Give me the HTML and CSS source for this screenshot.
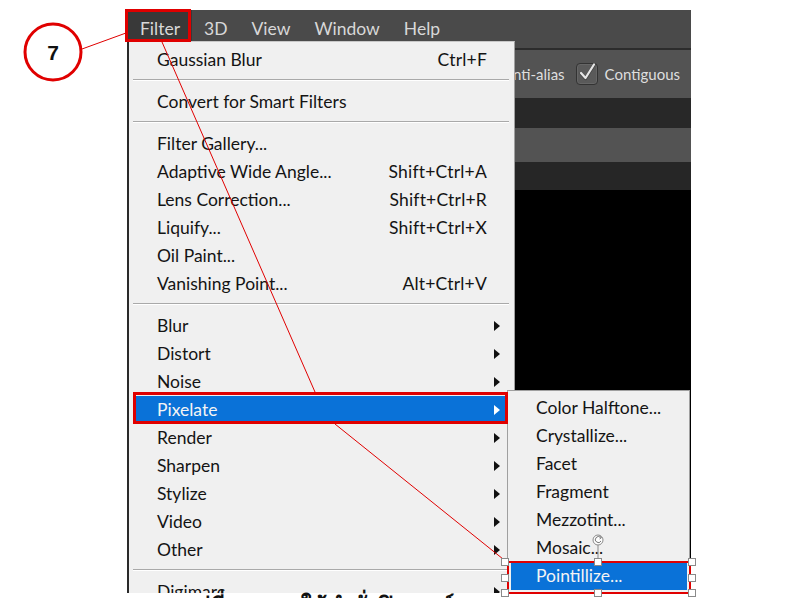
FILE: index.html
```html
<!DOCTYPE html>
<html>
<head>
<meta charset="utf-8">
<link rel="stylesheet" href="styles.css">
</head>
<body>
<div class="page">
  <div class="ps">
    <div class="menubar">
      <span class="mb-item active">Filter</span>
      <span class="mb-item">3D</span>
      <span class="mb-item">View</span>
      <span class="mb-item">Window</span>
      <span class="mb-item">Help</span>
    </div>
    <div class="optbar">
      <span class="opt-label">Anti-alias</span>
      <span class="chk">
        <svg width="22" height="22" viewBox="0 0 22 22"><path d="M5 11.5 L9.5 16.5 L18 3" fill="none" stroke="#2e2e2e" stroke-width="3.2" stroke-linejoin="round" stroke-linecap="round" opacity="0.5"/><path d="M5 11 L9.5 16 L18 2.5" fill="none" stroke="#e6e6e6" stroke-width="2.2" stroke-linejoin="round" stroke-linecap="round"/></svg>
      </span>
      <span class="opt-label">Contiguous</span>
    </div>
    <div class="band band-dark"></div>
    <div class="band band-gray"></div>
    <div class="band band-dark2"></div>
    <div class="canvas"></div>
  </div>

  <div class="menu">
    <div class="item"><span>Gaussian Blur</span><span class="sc">Ctrl+F</span></div>
    <div class="sep"></div>
    <div class="item"><span>Convert for Smart Filters</span></div>
    <div class="sep"></div>
    <div class="item"><span>Filter Gallery...</span></div>
    <div class="item"><span>Adaptive Wide Angle...</span><span class="sc">Shift+Ctrl+A</span></div>
    <div class="item"><span>Lens Correction...</span><span class="sc">Shift+Ctrl+R</span></div>
    <div class="item"><span>Liquify...</span><span class="sc">Shift+Ctrl+X</span></div>
    <div class="item"><span>Oil Paint...</span></div>
    <div class="item"><span>Vanishing Point...</span><span class="sc">Alt+Ctrl+V</span></div>
    <div class="sep"></div>
    <div class="item"><span>Blur</span><span class="arrow"></span></div>
    <div class="item"><span>Distort</span><span class="arrow"></span></div>
    <div class="item"><span>Noise</span><span class="arrow"></span></div>
    <div class="item hl"><span>Pixelate</span><span class="arrow"></span></div>
    <div class="item"><span>Render</span><span class="arrow"></span></div>
    <div class="item"><span>Sharpen</span><span class="arrow"></span></div>
    <div class="item"><span>Stylize</span><span class="arrow"></span></div>
    <div class="item"><span>Video</span><span class="arrow"></span></div>
    <div class="item"><span>Other</span><span class="arrow"></span></div>
    <div class="sep"></div>
    <div class="item"><span>Digimarc</span><span class="arrow"></span></div>
  </div>

  <div class="submenu">
    <div class="sitem">Color Halftone...</div>
    <div class="sitem">Crystallize...</div>
    <div class="sitem">Facet</div>
    <div class="sitem">Fragment</div>
    <div class="sitem">Mezzotint...</div>
    <div class="sitem">Mosaic...</div>
    <div class="sitem hl">Pointillize...</div>
  </div>

  <div class="caption">รูปที่ 7.7 การใช้คำสั่งฟิลเตอร์แบบ Pointillize</div>

  <svg class="annot" width="790" height="598" viewBox="0 0 790 598">
    <circle cx="53" cy="52" r="28" fill="#fff" stroke="#e00000" stroke-width="3"/>
    <text x="53" y="60" text-anchor="middle" class="num">7</text>
    <line x1="82" y1="49" x2="126" y2="33" stroke="#e00000" stroke-width="1"/>
    <rect x="126.5" y="10.5" width="63" height="30" fill="none" stroke="#e00000" stroke-width="3"/>
    <line x1="162" y1="42" x2="315" y2="392" stroke="#e00000" stroke-width="1"/>
    <rect x="134.5" y="393.5" width="372" height="29" fill="none" stroke="#e00000" stroke-width="3"/>
    <line x1="335" y1="424" x2="503" y2="559" stroke="#e00000" stroke-width="1"/>
    <rect x="508" y="562" width="182" height="31" fill="none" stroke="#e00000" stroke-width="2"/>
    <line x1="598" y1="545" x2="598" y2="559" stroke="#8a8a8a" stroke-width="1"/>
    <circle cx="598" cy="540" r="5" fill="#fff" stroke="#8a8a8a" stroke-width="1"/>
    <path d="M600.5 537.5 A3 3 0 1 0 601 541" fill="none" stroke="#777" stroke-width="1"/>
    <path d="M599.5 536 L601.5 537.6 L599.6 539" fill="none" stroke="#777" stroke-width="1"/>
    <g fill="#fff" stroke="#8a8a8a" stroke-width="1">
      <rect x="501.5" y="558.5" width="7" height="7"/>
      <rect x="594.5" y="558.5" width="7" height="7"/>
      <rect x="688.5" y="558.5" width="7" height="7"/>
      <rect x="501.5" y="574.5" width="7" height="7"/>
      <rect x="688.5" y="574.5" width="7" height="7"/>
      <rect x="501.5" y="589.5" width="7" height="7"/>
      <rect x="594.5" y="589.5" width="7" height="7"/>
      <rect x="688.5" y="589.5" width="7" height="7"/>
    </g>
  </svg>
</div>
</body>
</html>
```

FILE: styles.css
```css
* { box-sizing: border-box; }
html, body { margin: 0; padding: 0; background: #fff; }
body { font-family: Lato, "Liberation Sans", sans-serif; }

.page {
  position: relative;
  width: 790px;
  height: 598px;
  overflow: hidden;
  background: #fff;
  padding-top: 10px;
}

.ps {
  margin-left: 127px;
  width: 564px;
  height: 588px;
  display: flex;
  flex-direction: column;
  background: #000;
}

.menubar {
  height: 40px;
  background: #4a4a4a;
  border-bottom: 2px solid #2c2c2c;
  display: flex;
  align-items: stretch;
}
.mb-item {
  display: flex;
  align-items: center;
  padding: 0 12px 2px 12px;
  font-size: 17.5px;
  color: #d8d8d8;
}
.mb-item.active {
  background: #393939;
  padding-left: 13px;
  padding-right: 12px;
}

.optbar {
  height: 48px;
  background: #535353;
  display: flex;
  align-items: center;
  justify-content: flex-end;
  padding-right: 11px;
  gap: 7px;
}
.opt-label {
  font-size: 15px;
  color: #dedede;
  margin-top: -1px;
}
.opt-label:first-child { margin-right: 4px; }
.chk {
  width: 22px;
  height: 22px;
  border: 1px solid #333;
  border-radius: 4px;
  background: #5a5a5a;
  display: flex;
  align-items: center;
  justify-content: center;
  box-shadow: inset 0 0 0 1px #666;
  overflow: visible;
}
.chk svg { flex: none; margin-top: -2px; }

.band { flex: none; }
.band-dark { height: 30px; background: #282828; }
.band-gray { height: 34px; background: #535353; }
.band-dark2 { height: 28px; background: #262626; }
.canvas { flex: 1; background: #000; }

.menu {
  position: absolute;
  left: 127px;
  top: 41px;
  width: 388px;
  height: 580px;
  background: #f0f0f0;
  border-left: 2px solid #2a2a2a;
  border-right: 1px solid #a0a0a0;
  border-top: 1px solid #c8c8c8;
  padding-top: 4px;
  font-size: 17.5px;
  color: #141414;
}
.item {
  height: 28px;
  line-height: 28px;
  margin: 0 6px 0 4px;
  padding: 0 8px 0 24px;
  display: flex;
  justify-content: space-between;
  align-items: center;
  white-space: nowrap;
}
.item .sc { margin-right: 13px; letter-spacing: 0.2px; }
.item.hl { background: #0a72d8; color: #f4f4f4; }
.arrow {
  width: 0;
  height: 0;
  border-left: 6px solid #111;
  border-top: 5px solid transparent;
  border-bottom: 5px solid transparent;
}
.item.hl .arrow { border-left-color: #fff; }
.sep {
  height: 2px;
  margin: 5px 5px 7px 4px;
  border-top: 1px solid #a9a9a9;
  border-bottom: 1px solid #ffffff;
}

.submenu {
  position: absolute;
  left: 507px;
  top: 390px;
  width: 183px;
  height: 206px;
  background: #f0f0f0;
  border: 1px solid #a0a0a0;
  padding-top: 3px;
  font-size: 17.5px;
  color: #141414;
}
.sitem {
  height: 28px;
  line-height: 28px;
  margin: 0 2px 0 3px;
  padding-left: 25px;
  white-space: nowrap;
}
.sitem.hl { background: #0a72d8; color: #f4f4f4; }

.caption {
  position: absolute;
  left: 0;
  top: 593px;
  width: 790px;
  height: 10px;
  background: #fff;
  padding-left: 184px;
  font-family: "Liberation Serif", "Noto Sans", serif;
  font-weight: bold;
  font-size: 22px;
  line-height: 26px;
  color: #111;
  white-space: nowrap;
}

.annot {
  position: absolute;
  left: 0;
  top: 0;
  pointer-events: none;
}
.num {
  font-family: "Liberation Sans", Arial, sans-serif;
  font-weight: bold;
  font-size: 21px;
  fill: #111;
}
```
